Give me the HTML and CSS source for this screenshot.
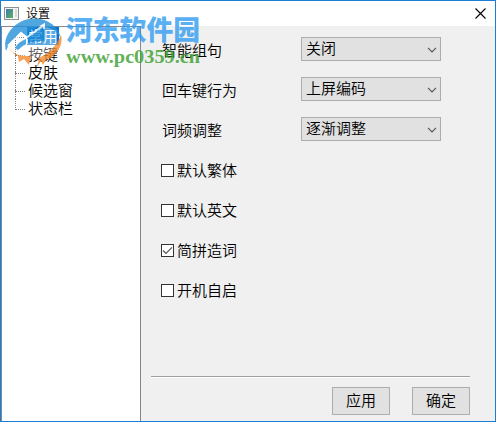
FILE: index.html
```html
<!DOCTYPE html>
<html lang="zh-CN">
<head>
<meta charset="utf-8">
<title>设置</title>
<link rel="stylesheet" href="styles.css">
</head>
<body>
<div class="window">
  <header class="titlebar">
    <svg class="app-icon" width="15" height="13" viewBox="0 0 15 13">
      <defs><linearGradient id="g" x1="0" y1="0" x2="1" y2="1"><stop offset="0" stop-color="#3f78b5"/><stop offset="1" stop-color="#5bb45a"/></linearGradient></defs>
      <rect x=".5" y=".5" width="14" height="12" fill="#f5f5f5" stroke="#8b9296"/>
      <rect x="2" y="2" width="7" height="9" fill="url(#g)"/>
      <path d="M11 3h2M11 5h2M11 7h2M11 9h2" stroke="#b9bec2"/>
    </svg>
    <span class="title">设置</span>
    <svg class="close" width="11" height="11" viewBox="0 0 11 11"><path d="M.5.5l10 10M10.500 .5l-10 10" stroke="#000" stroke-width="1.1"/></svg>
  </header>
  <div class="body">
    <nav class="tree">
      <div class="node"><span class="selected">常用</span></div>
      <div class="node"><span>按键</span></div>
      <div class="node"><span>皮肤</span></div>
      <div class="node"><span>候选窗</span></div>
      <div class="node"><span>状态栏</span></div>
    </nav>
    <main class="panel">
      <div class="row"><span class="label">智能组句</span><div class="select">关闭<svg width="10" height="6" viewBox="0 0 10 6"><path d="M1 .8l4 4 4-4"/></svg></div></div>
      <div class="row"><span class="label">回车键行为</span><div class="select">上屏编码<svg width="10" height="6" viewBox="0 0 10 6"><path d="M1 .8l4 4 4-4"/></svg></div></div>
      <div class="row"><span class="label">词频调整</span><div class="select">逐渐调整<svg width="10" height="6" viewBox="0 0 10 6"><path d="M1 .8l4 4 4-4"/></svg></div></div>
      <div class="row"><i class="box"></i>默认繁体</div>
      <div class="row"><i class="box"></i>默认英文</div>
      <div class="row"><i class="box"><svg width="11" height="11" viewBox="0 0 11 11"><path d="M1 5.500l3 3L10 2.300"/></svg></i>简拼造词</div>
      <div class="row"><i class="box"></i>开机自启</div>
      <footer class="actions"><div class="button">应用</div><div class="button">确定</div></footer>
    </main>
  </div>
  <div class="watermark">
    <svg class="mark" width="60" height="54" viewBox="0 0 60 54">
      <path fill="#fff" opacity=".45" d="M12 30L22 22L40 10L52 16V36L38 44H18Z"/>
      <path fill="#2590d8" d="M2 36C-2 22 9 7 25 4C42 1 54 11 57 23L51 16Q46 12 41 12V8L24 17V22L17 17L5 29Z"/>
      <path fill="#2590d8" d="M11 33Q14 27 22 24V29L24 22L40 12V26Q23 25 14 35Z"/>
      <path fill="#f58a2c" d="M5 33Q11 41 21 41L27 41L25 50L20 44L15 47L14 41Q8 38 5 33ZM33 52L35 43Q51 36 57 20C60 31 51 42 42 45L39 50L37 46Z"/>
      <path d="M4 31L17 18L22 23L40 10V14M23 24V29" fill="none" stroke="#fff" stroke-width="2"/>
    </svg>
    <svg class="brand" width="140" height="32"><text x="0" y="25" textLength="134" lengthAdjust="spacingAndGlyphs">河东软件园</text></svg>
    <svg class="site" width="136" height="20"><text x="0" y="15" textLength="134" lengthAdjust="spacingAndGlyphs">www.pc0359.cn</text></svg>
  </div>
</div>
</body>
</html>
```
FILE: styles.css
```css
* { box-sizing: border-box; }
body {
  margin: 0;
  font: 350 15px/18px "Noto Sans CJK SC", sans-serif;
  color: #000;
}
.window {
  position: relative;
  width: 496px;
  height: 422px;
  border: 1px solid #1a7fd4;
  background: #fff;
  overflow: hidden;
}
.titlebar {
  display: flex;
  align-items: center;
  height: 25px;
  padding: 0 9px 0 3px;
}
.title { margin-left: 7px; font-size: 12px; line-height: 16px; padding-bottom: 2px; }
.close { margin-left: auto; }
.body { display: flex; height: 395px; }
.tree {
  width: 140px;
  border: 1px solid #828790;
  border-bottom: 0;
  background: #fff;
}
.node {
  position: relative;
  height: 18px;
  padding-left: 25px;
}
.node span { display: block; height: 18px; padding-left: 1px; line-height: 17px; }
.node .selected { width: 32px; background: #0078d7; color: #fff; }
.node::before {
  content: "";
  position: absolute;
  left: 13px;
  top: 0;
  width: 9px;
  height: 10px;
  border-left: 1px dotted #808080;
  border-bottom: 1px dotted #808080;
}
.node::after {
  content: "";
  position: absolute;
  left: 13px;
  top: 9px;
  height: 9px;
  border-left: 1px dotted #808080;
}
.node:first-child::before { border-left: 0; }
.node:last-child::after { display: none; }
.panel {
  flex: 1;
  display: flex;
  flex-direction: column;
  padding: 4px 25px 0 10px;
  background: #f0f0f0;
}
.row { display: flex; align-items: center; height: 40px; padding-left: 10px; }
.label { width: 140px; padding-left: 1px; }
.select {
  display: flex;
  align-items: center;
  justify-content: space-between;
  width: 140px;
  height: 24px;
  margin-bottom: 2px;
  padding: 0 3px 3px 4px;
  border: 1px solid #adadad;
  background: #e1e1e1;
}
.select svg { margin-top: 4px; }
.select path, .box path { fill: none; stroke: #555; stroke-width: 1.2; }
.box {
  width: 13px;
  height: 13px;
  margin-right: 3px;
  border: 1px solid #333;
  background: #fff;
}
.box svg { display: block; }
.actions {
  display: flex;
  justify-content: flex-end;
  gap: 22px;
  height: 45px;
  margin-top: auto;
  padding-top: 10px;
  border-top: 1px solid #a0a0a0;
  box-shadow: inset 0 1px #fff;
}
.button {
  width: 58px;
  height: 28px;
  border: 1px solid #adadad;
  background: #e1e1e1;
  line-height: 24px;
  text-align: center;
}
.watermark { position: absolute; left: 3px; top: 14px; width: 200px; height: 54px; }
.mark { position: absolute; left: 0; top: 0; opacity: .8; }
.brand {
  position: absolute;
  left: 62px;
  top: 0;
  overflow: visible;
  font-size: 27px;
  font-weight: 900;
  fill: #2d9bf0;
  opacity: .78;
}
.site {
  position: absolute;
  left: 62px;
  top: 33px;
  overflow: visible;
  font: bold 18px "Liberation Serif", serif;
  fill: #38a02c;
  opacity: .8;
}
```
